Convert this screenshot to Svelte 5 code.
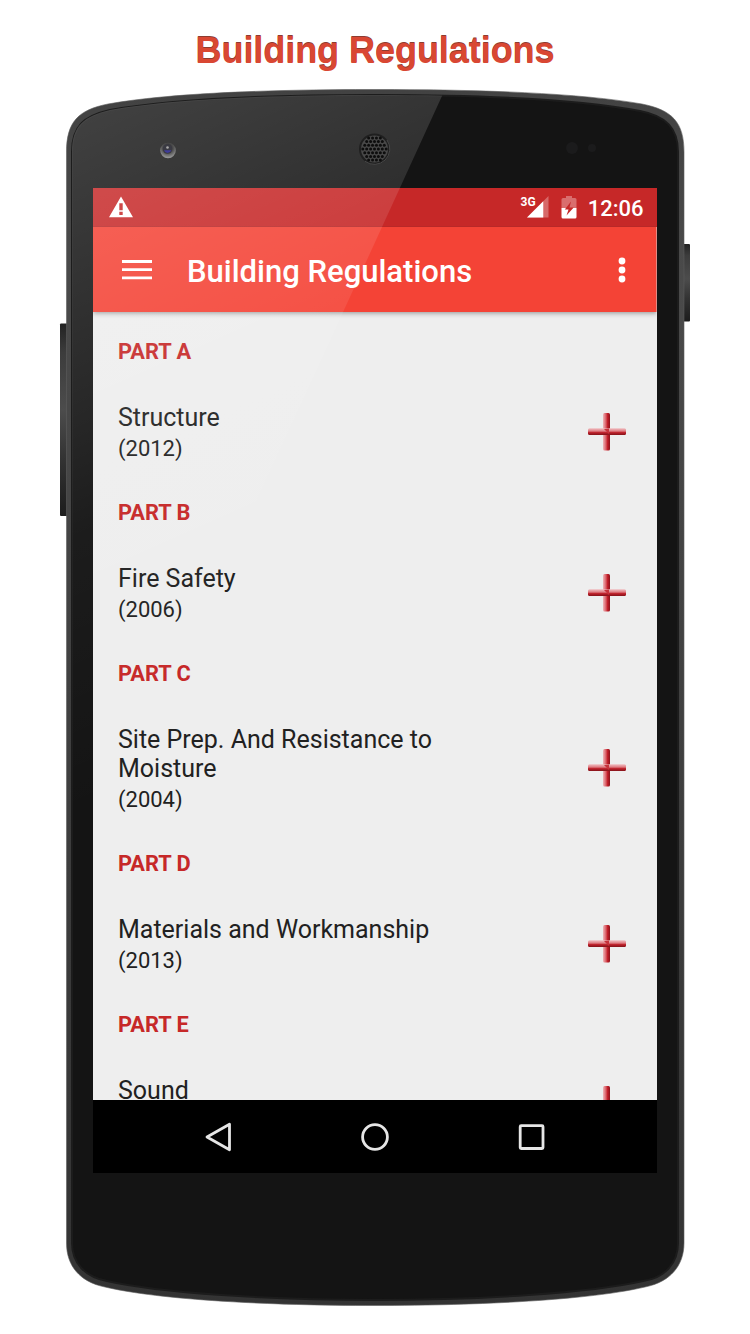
<script>
  const parts = [
    { id: 'A', title: 'Structure', year: 2012 },
    { id: 'B', title: 'Fire Safety', year: 2006 },
    { id: 'C', title: 'Site Prep. And Resistance to Moisture', year: 2004 },
    { id: 'D', title: 'Materials and Workmanship', year: 2013 },
    { id: 'E', title: 'Sound' }
  ];

  const holes = [];
  for (let r = -3; r <= 3; r++) {
    for (let c = -3; c <= 3; c++) {
      const x = c * 3.9 + (r % 2 ? 1.95 : 0);
      const y = r * 3.7;
      if (Math.hypot(x, y) < 12.6) holes.push([374.5 + x, 149 + y]);
    }
  }

  const body =
    'M66.5 1243V152C66.5 122 78 110 108 104C170 93 270 89.500 375 89.500C480 89.500 580 93 642 104C672 110 684 122 684 152V1243C684 1266 670 1282 645 1287C590 1300 480 1305.500 375 1305.500C270 1305.500 160 1300 105 1287C80 1282 66.500 1266 66.500 1243Z';
  const glass =
    'M72 1243V152C72 126 84 116 110 110C172 99 270 95 375 95C480 95 578 99 640 111C666 116 678 128 678 152V1243C678 1263 665 1278 643 1281C590 1293 480 1300 375 1300C270 1300 160 1293 107 1281C85 1277 72 1263 72 1243Z';
</script>

<main>
  <h1>Building Regulations</h1>

  <svg class="phone" viewBox="0 0 750 1334" aria-hidden="true">
    <defs>
      <linearGradient id="rim" x1="0" y1="0" x2="0" y2="1">
        <stop offset="0" stop-color="#424242" />
        <stop offset=".15" stop-color="#4a4a4a" />
        <stop offset="1" stop-color="#333" />
      </linearGradient>
      <linearGradient id="key" x1="0" y1="0" x2="0" y2="1">
        <stop offset="0" stop-color="#222" />
        <stop offset=".15" stop-color="#3c3c3c" />
        <stop offset=".45" stop-color="#4c4c4c" />
        <stop offset=".7" stop-color="#333" />
        <stop offset="1" stop-color="#1c1c1c" />
      </linearGradient>
      <radialGradient id="lens" cx=".5" cy=".3" r=".75">
        <stop offset="0" stop-color="#222" />
        <stop offset=".5" stop-color="#555" />
        <stop offset="1" stop-color="#aaa" />
      </radialGradient>
    </defs>
    <rect x="60" y="323.5" width="9" height="192.5" rx="1" fill="url(#key)" />
    <rect x="681" y="244" width="9" height="77.5" rx="1" fill="url(#key)" />
    <path d={body} fill="url(#rim)" stroke="#5c5c5c" stroke-width=".6" />
    <path d={glass} fill="#141414" stroke="#1c1c1c" stroke-width="2" />
    <circle cx="572" cy="148" r="6" fill="#1b1b1c" />
    <circle cx="592" cy="148" r="4" fill="#1b1b1c" />
  </svg>

  <section class="screen">
    <div class="status">
      <svg width="26" height="24" viewBox="0 0 26 24">
        <path fill="#fff" fill-rule="evenodd" d="M13 1.5 25 22.2H1ZM11.300 8.200V15.200H14.700V8.200ZM11.300 16.800V20H14.700V16.800Z" />
      </svg>
      <span class="spacer"></span>
      <span class="net">3G</span>
      <svg class="signal" width="22" height="22" viewBox="0 0 23 23">
        <path fill="#fff" fill-opacity=".3" d="M0 22.5H22.5V0Z" />
        <path fill="#fff" d="M0 22.5H17V5.5Z" />
      </svg>
      <svg class="battery" width="16" height="23" viewBox="0 0 16 23">
        <path fill="#fff" fill-opacity=".33" d="M5 0H11V2H14Q15.5 2 15.5 3.5V12H.5V3.5Q.5 2 2 2H5Z" />
        <path fill="#fff" d="M.5 12H15.5V21Q15.5 22.5 14 22.5H2Q.5 22.5 .5 21Z" />
        <path fill="#c62828" d="M10 5.5 3.800 13.500H7.500L5.500 19.500L12.700 11.500H8.500Z" />
      </svg>
      <span class="clock">12:06</span>
    </div>

    <header>
      <svg width="30" height="22" viewBox="0 0 30 22">
        <path stroke="#fff" stroke-width="2.8" d="M0 2.5H30M0 10.700H30M0 18.900H30" />
      </svg>
      <h2>Building Regulations</h2>
      <svg width="8" height="26" viewBox="0 0 8 26" fill="#fff">
        <circle cx="4" cy="4" r="3.4" /><circle cx="4" cy="13" r="3.4" /><circle cx="4" cy="22" r="3.4" />
      </svg>
    </header>

    <div class="list">
      {#each parts as part}
        <h3>PART {part.id}</h3>
        <div class="row">
          <div class="text">
            <p class="title">{part.title}</p>
            {#if part.year}<p class="year">({part.year})</p>{/if}
          </div>
          <svg width="40" height="40" viewBox="0 0 40 40">
            <defs>
              <linearGradient id="vbar"><stop offset="0" stop-color="#efb5b9" /><stop offset=".42" stop-color="#d95f66" /><stop offset=".65" stop-color="#c11e29" /><stop offset="1" stop-color="#8b121a" /></linearGradient>
              <linearGradient id="hbar" x1="0" y1="0" x2="0" y2="1"><stop offset="0" stop-color="#f0bfc2" /><stop offset=".42" stop-color="#df7d83" /><stop offset=".65" stop-color="#bd202a" /><stop offset="1" stop-color="#86131a" /></linearGradient>
            </defs>
            <rect x="16" y="1" width="7" height="37.5" rx="1.5" fill="url(#vbar)" />
            <rect x="1" y="16.300" width="38" height="6.600" rx="1.5" fill="url(#hbar)" />
            <path d="M17 17 22 22V16.500Z" fill="#c6323b" />
          </svg>
        </div>
      {/each}
    </div>

    <nav>
      <svg width="30" height="32" viewBox="0 0 30 32"><path d="M4 16 26.500 3.200V28.800Z" /></svg>
      <svg width="30" height="32" viewBox="0 0 30 32"><circle cx="15" cy="16" r="12.400" /></svg>
      <svg width="30" height="32" viewBox="0 0 30 32"><rect x="3.200" y="4.700" width="22.800" height="22.800" rx="1" /></svg>
    </nav>
  </section>

  <svg class="phone" viewBox="0 0 750 1334" aria-hidden="true">
    <defs>
      <linearGradient id="shine" gradientUnits="userSpaceOnUse" x1="90" y1="110" x2="350" y2="695">
        <stop offset="0" stop-color="#fff" stop-opacity=".19" />
        <stop offset=".24" stop-color="#fff" stop-opacity=".13" />
        <stop offset=".44" stop-color="#fff" stop-opacity=".08" />
        <stop offset=".6" stop-color="#fff" stop-opacity=".035" />
        <stop offset="1" stop-color="#fff" stop-opacity="0" />
      </linearGradient>
      <clipPath id="front"><path d={glass} /></clipPath>
    </defs>
    <path clip-path="url(#front)" d="M60 80H449.300L72 904H60Z" fill="url(#shine)" />
    <circle cx="374.500" cy="149" r="15.500" fill="#1f1f1f" />
    <path d="M365 161.300A15.500 15.500 0 0 0 387 140" fill="none" stroke="#484848" stroke-width="1" />
    <circle cx="374.500" cy="149" r="13.500" fill="#484848" />
    {#each holes as [x, y]}
      <circle cx={x} cy={y} r="1.500" fill="#0d0d0d" />
    {/each}
    <circle cx="168" cy="150.500" r="7.800" fill="url(#lens)" />
    <circle cx="167.500" cy="149" r="4.800" fill="#3a3a43" />
    <path d="M164 150.300H171.500Q170 153 167.500 153T164 150.300Z" fill="#403d9b" />
    <circle cx="167.500" cy="147.500" r="1.300" fill="#aaa" />
  </svg>
</main>

<style>
  :global(body) { background: #fff; }
  main {
    position: relative;
    width: 750px;
    height: 1334px;
    overflow: hidden;
    font-family: Roboto, "Liberation Sans", sans-serif;
  }
  h1, h2, h3, p { margin: 0; }
  h1 {
    height: 188px;
    box-sizing: border-box;
    padding-top: 30px;
    text-align: center;
    font: bold 36px/42px "Liberation Sans", Arial, sans-serif;
    letter-spacing: -.05px;
    color: #d94733;
    text-shadow: 0 -1px 0 #8d3c30;
  }
  .phone {
    position: absolute;
    inset: 0;
    width: 750px;
    height: 1334px;
    pointer-events: none;
  }
  .screen {
    position: relative;
    display: flex;
    flex-direction: column;
    width: 563.5px;
    height: 985px;
    margin-left: 93px;
    background: #eee;
  }
  svg { flex: none; display: block; }
  .status {
    display: flex;
    align-items: center;
    height: 39px;
    flex: none;
    box-sizing: border-box;
    padding: 0 13px 0 15px;
    background: #c62828;
    color: #fff;
    border-bottom: 1px solid #b92828;
  }
  .spacer { flex: 1; }
  .net { font-size: 12px; line-height: 12px; font-weight: 700; margin: 0 -9px 10px 0; }
  .signal { margin-right: 12px; }
  .battery { margin-right: 11px; }
  .clock { font-size: 22px; font-weight: 500; line-height: 38px; padding-top: 4px; }
  header {
    position: relative;
    display: flex;
    align-items: center;
    height: 85px;
    flex: none;
    box-sizing: border-box;
    padding: 0 31px 0 28.5px;
    background: #f44336;
    color: #fff;
    box-shadow: 0 1px 5px rgba(0, 0, 0, .4);
    clip-path: inset(0 0 -8px 0);
  }
  h2 { flex: 1; margin-left: 35.5px; font-size: 31px; font-weight: 500; line-height: 40px; padding-top: 5px; }
  .list { flex: 1; min-height: 0; overflow: hidden; padding: .5px 30px 0 25px; }
  h3 { height: 77px; font-size: 21.8px; font-weight: 700; line-height: 78.5px; color: #c62828; }
  .row { display: flex; align-items: center; justify-content: space-between; padding: 12px 0; color: #212121; }
  .text { width: 380px; min-height: 60px; position: relative; top: 1.5px; }
  .title { font-size: 25px; line-height: 29px; }
  .year { font-size: 22px; line-height: 30px; padding-top: 1px; position: relative; top: .5px; }
  nav {
    display: flex;
    align-items: center;
    justify-content: center;
    gap: 127px;
    height: 73px;
    flex: none;
    background: #000;
  }
  nav svg { fill: none; stroke: #e6e6e6; stroke-width: 2.8; stroke-linejoin: round; }
</style>
